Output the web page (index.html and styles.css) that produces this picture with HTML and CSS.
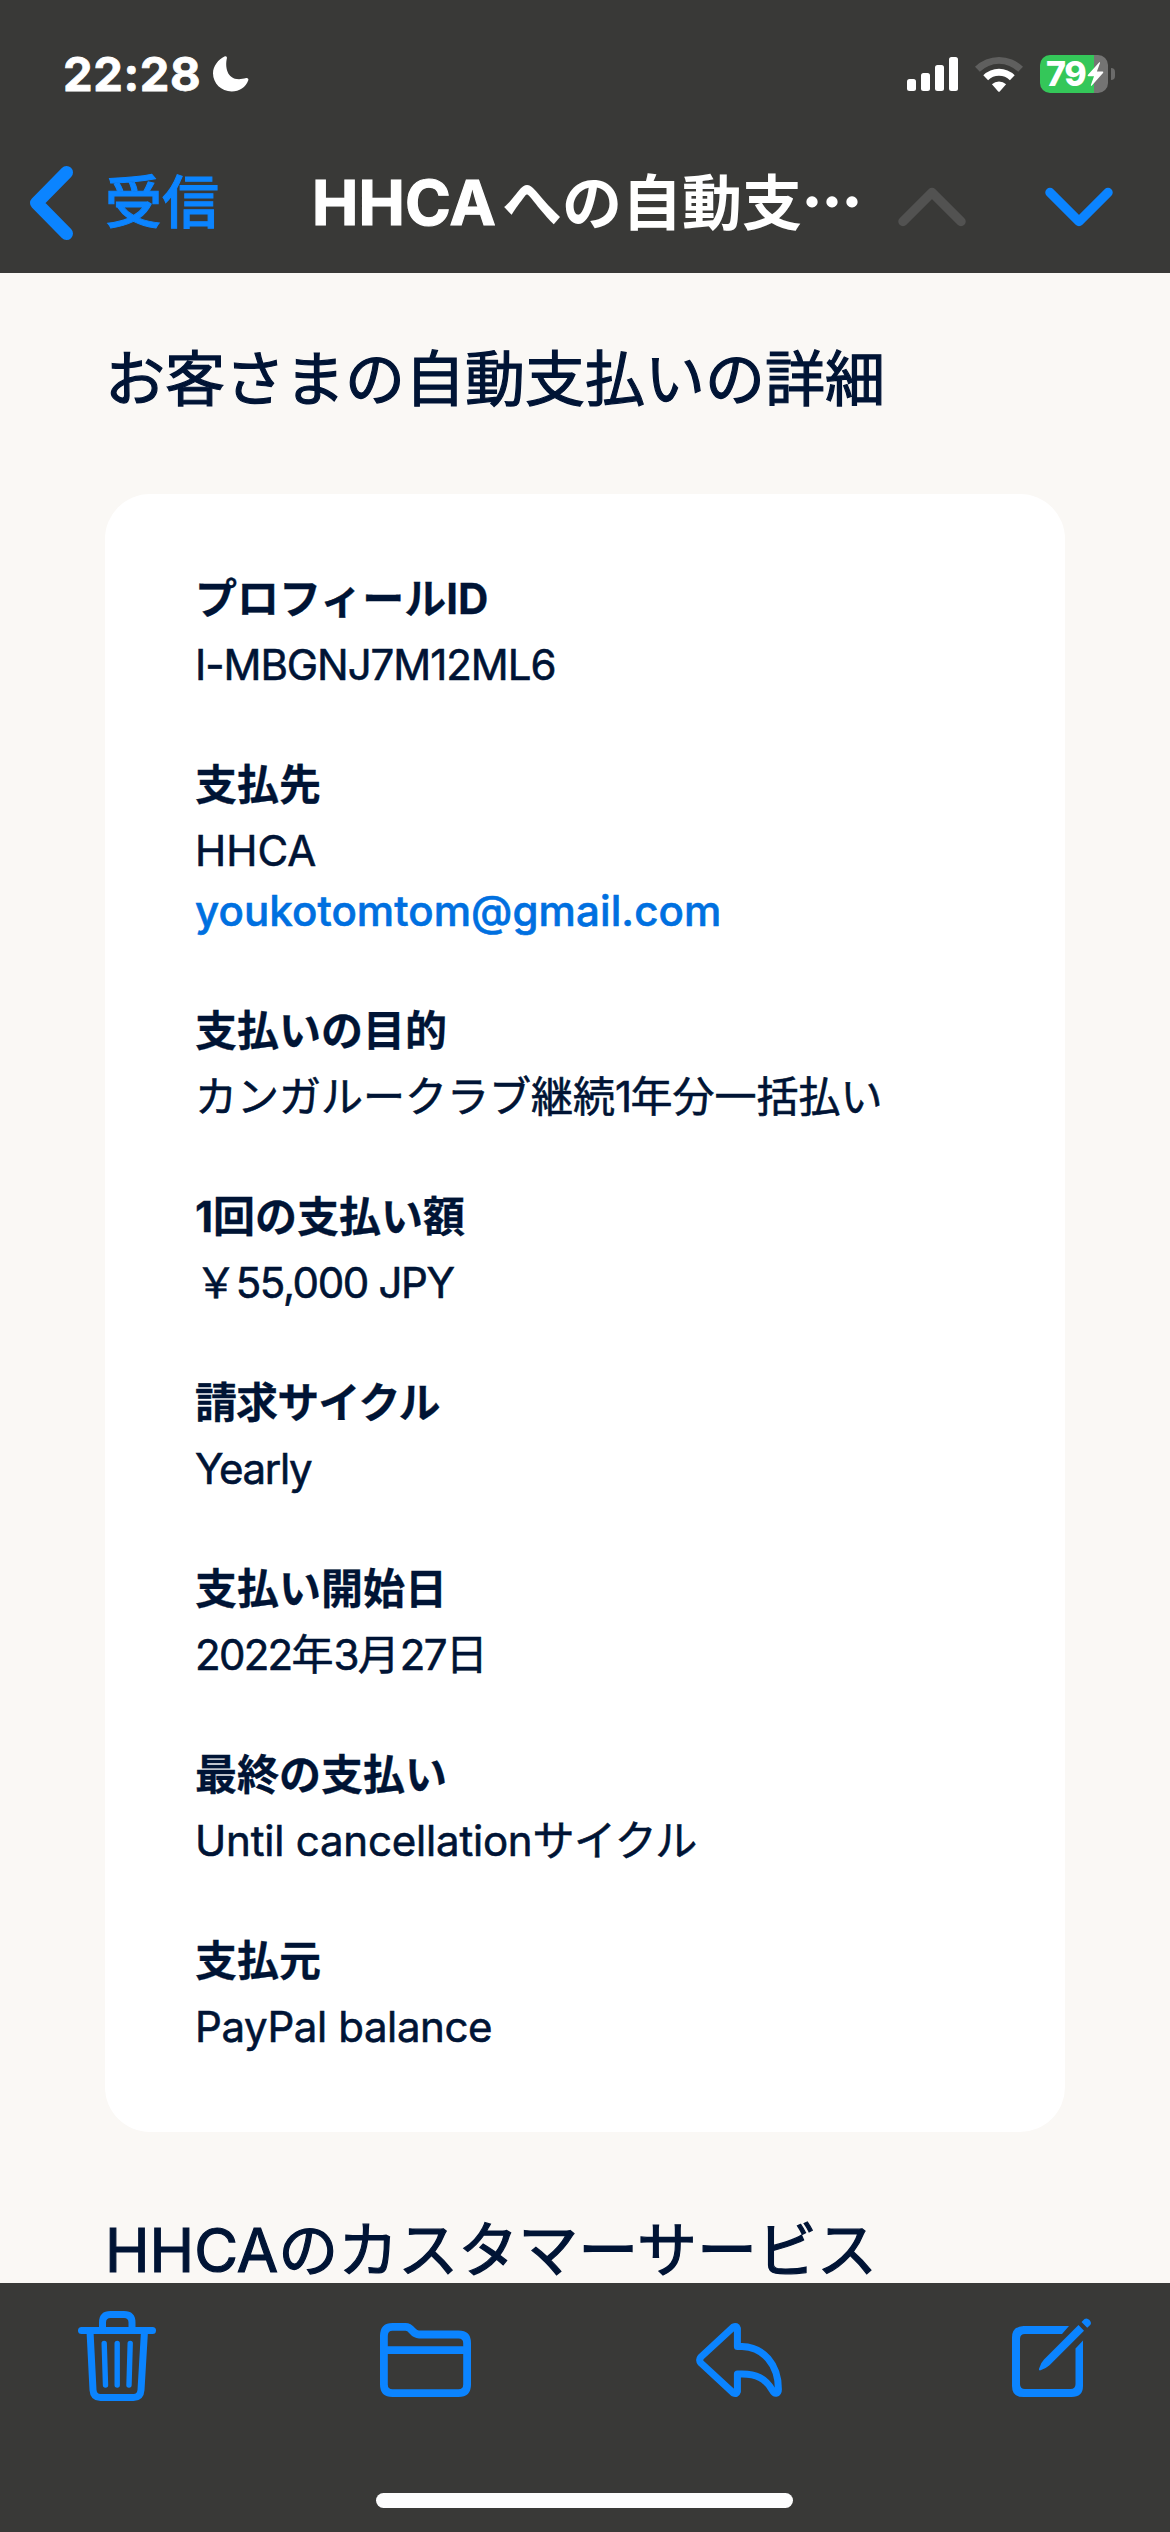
FILE: index.html
```html
<!DOCTYPE html>
<html lang="ja">
<head>
<meta charset="utf-8">
<meta name="viewport" content="width=device-width">
<title>お客さまの自動支払いの詳細</title>
<link rel="stylesheet" href="styles.css">
</head>
<body>
<div class="screen">
  <header class="header">
    <div class="status">
      <div class="status-left">
        <span class="time">22:28</span>
        <svg class="moon" width="36" height="36" viewBox="0 0 36 36"><path d="M11.500.6c1.300-.9 2.800.2 2.400 1.600C11.600 12 14.500 27.500 33.200 22c1.600-.2 2.600.8 2.100 2.200C32.800 31.200 26.300 35.500 18.700 35.500 8.300 35.500 0 27.400 0 17.300 0 10.200 5.600 3.200 11.500.6z" fill="#fff"/></svg>
      </div>
      <div class="status-right">
        <svg class="signal" width="51" height="34" viewBox="0 0 51 34" fill="#fff"><rect x="0" y="22" width="9" height="12" rx="2.500"/><rect x="14" y="16" width="9" height="18" rx="2.500"/><rect x="28" y="8" width="9" height="26" rx="2.500"/><rect x="42" y="0" width="9" height="34" rx="2.500"/></svg>
        <svg class="wifi" width="48" height="36" viewBox="0 0 48 36"><path d="M0 10.800A34 34 0 0 1 48 10.800L43.200 15.800A27.200 27.200 0 0 0 4.800 15.800z" fill="#5f5f5e"/><path d="M8.300 19.200A22.500 22.500 0 0 1 39.700 19.200L34.900 24.200A15.600 15.600 0 0 0 13.100 24.200z" fill="#fff"/><path d="M16.900 28.200A10.500 10.500 0 0 1 31.100 28.200L25 35.300Q24 36.300 23 35.300z" fill="#fff"/></svg>
        <div class="battery">
          <div class="battery-body">
            <span class="battery-text">79</span>
            <svg width="17" height="24" viewBox="0 0 17 24"><path d="M12.300.2Q13.300 0 13 1L9.900 9.500H15.600Q17 9.700 16 11L4.900 23.600Q3.700 24.400 3.900 23.100L7 14.200H1.300Q0 14 1 12.700z" fill="#fff"/></svg>
          </div>
          <div class="battery-cap"></div>
        </div>
      </div>
    </div>
    <nav class="nav">
      <a class="back">
        <svg width="44" height="74" viewBox="0 0 44 74"><path d="M37.500 6.500L7.500 37L37.500 67.500" fill="none" stroke="#0b84ff" stroke-width="13" stroke-linecap="round" stroke-linejoin="round"/></svg>
        <span class="back-label">受信</span>
      </a>
      <h1 class="title"><span class="title-latin">HHCA</span>への自動支<span class="cjk">…</span></h1>
      <div class="arrows">
        <svg width="68" height="40" viewBox="0 0 68 40"><path d="M5 34.500L34 5.500L63 34.500" fill="none" stroke="#525251" stroke-width="9.500" stroke-linecap="round" stroke-linejoin="round"/></svg>
        <svg width="68" height="40" viewBox="0 0 68 40"><path d="M5 5.500L34 34.500L63 5.500" fill="none" stroke="#0b84ff" stroke-width="9.500" stroke-linecap="round" stroke-linejoin="round"/></svg>
      </div>
    </nav>
  </header>

  <main class="mail">
    <h2 class="heading">お客さまの自動支払いの詳細</h2>
    <dl class="card">
      <div class="row"><dt>プロフィールID</dt><dd class="code">I-MBGNJ7M12ML6</dd></div>
      <div class="row"><dt>支払先</dt><dd>HHCA</dd><dd><a class="email">youkotomtom@gmail.com</a></dd></div>
      <div class="row"><dt>支払いの目的</dt><dd>カンガルークラブ継続<span class="digits">1</span>年分一括払い</dd></div>
      <div class="row"><dt>1回の支払い額</dt><dd class="price">￥55,000 JPY</dd></div>
      <div class="row"><dt class="cycle-label">請求サイクル</dt><dd class="cycle">Yearly</dd></div>
      <div class="row"><dt>支払い開始日</dt><dd><span class="digits">2022</span>年<span class="digits">3</span>月<span class="digits">27</span>日</dd></div>
      <div class="row"><dt>最終の支払い</dt><dd><span class="until">Until cancellation</span><span class="kana">サイクル</span></dd></div>
      <div class="row"><dt>支払元</dt><dd class="source">PayPal balance</dd></div>
    </dl>
    <h2 class="heading service">HHCAのカスタマーサービス</h2>
  </main>

  <footer class="toolbar">
    <div class="tools">
      <svg class="trash" width="78" height="90" viewBox="0 0 78 90" fill="none" stroke="#0b84ff" stroke-linecap="round" stroke-linejoin="round"><path d="M3.500 19.500H74.500" stroke-width="7"/><path d="M24.500 19V11.500Q24.500 3.500 32.500 3.500H46Q54 3.500 54 11.500V19M12 20L15 79Q15.500 86.500 22.500 86.500H55.500Q62.500 86.500 63 79L66.500 20" stroke-width="7"/><path d="M26.200 32.500L27.500 74M39.200 32.500V74M52.200 32.500L51 74" stroke-width="5.400"/></svg>
      <svg class="folder" width="91" height="74" viewBox="0 0 91 74" fill="none" stroke="#0b84ff" stroke-width="7.800" stroke-linejoin="round"><path d="M3.900 13Q3.900 3.900 12.500 3.900H25.500C32.500 3.900 32 11.500 39 11.500H78.500Q87.100 11.500 87.100 20V61.500Q87.100 70.100 78.500 70.100H12.500Q3.900 70.100 3.900 61.500zM4 27.200H87"/></svg>
      <svg class="reply" width="86" height="74" viewBox="0 0 86 74" fill="none" stroke="#0b84ff" stroke-width="7" stroke-linejoin="round"><path d="M37.500 3.900Q40.500 2.500 41.400 5.500V23.500H46C67 24 82.500 41 82.400 66.500C82.400 71 78.500 71.500 76.500 67.500C69.500 55 60 51 46 51H41.400V68.500Q40.500 71.500 37.500 70.100L4.900 40Q2.500 37 4.900 34z"/></svg>
      <svg width="79" height="79" viewBox="0 0 79 79"><path d="M57 8H11.500Q0 8.500 0 19.500V68Q0 79 11.500 79H59.500Q71 79 71 68V22.500L63.500 30.500V66Q63.500 71 58.500 71H13Q8 71 8 66V21Q8 16 13 16H50z" fill="#0b84ff"/><path d="M66.500 7L72 12.700L37.500 47.200Q34 50.500 28 52.400Q26.300 52.400 27.300 50Q29 44.500 32 41.500zM69.500 4L72.500 1Q75 -.5 77.500 2Q80 5 78.200 7L75.200 9.800z" fill="#0b84ff"/></svg>
    </div>
    <div class="home"></div>
  </footer>
</div>
</body>
</html>
```

FILE: styles.css
```css
* {
  box-sizing: border-box;
  margin: 0;
  padding: 0;
}

body {
  width: 1170px;
  height: 2532px;
  overflow: hidden;
  background: #faf8f5;
  font-family: Inter, "Noto Sans CJK JP", sans-serif;
  color: #001435;
}

svg {
  display: block;
  flex: none;
  overflow: visible;
}

.screen {
  display: flex;
  flex-direction: column;
  width: 1170px;
  height: 2532px;
}

.header {
  flex: none;
  height: 273px;
  background: #393937;
  color: #fff;
}

.status {
  display: flex;
  justify-content: space-between;
  align-items: center;
  height: 148px;
  padding: 0 55px 0 63px;
}

.status-left,
.status-right {
  display: flex;
  align-items: center;
}

.time {
  width: 150px;
  font-size: 47px;
  font-weight: 700;
  line-height: 60px;
  letter-spacing: 0.6px;
  white-space: nowrap;
  -webkit-text-stroke: 0.8px currentColor;
}

.wifi {
  margin: 0 17px;
}

.battery {
  display: flex;
  align-items: center;
  gap: 3px;
}

.battery-body {
  display: flex;
  align-items: center;
  gap: 1px;
  width: 68px;
  height: 38px;
  padding-left: 6px;
  border-radius: 10px;
  background: linear-gradient(to right, #34c759 54px, #747473 54px);
}

.battery-text {
  width: 40px;
  font-size: 34px;
  font-weight: 800;
  line-height: 38px;
  letter-spacing: -1.5px;
}

.battery-cap {
  width: 4px;
  height: 12px;
  border-radius: 0 4px 4px 0;
  background: #6b6b6a;
}

.nav {
  display: flex;
  align-items: center;
  height: 110px;
  padding: 0 57px 0 29px;
}

.back {
  display: flex;
  align-items: center;
  gap: 32px;
  width: 283px;
  color: #0b84ff;
}

.back-label {
  font-size: 57px;
  font-weight: 500;
  line-height: 80px;
  -webkit-text-stroke: 1px currentColor;
}

.title {
  width: 586px;
  padding-bottom: 4px;
  font-size: 60px;
  font-weight: 700;
  line-height: 80px;
  white-space: nowrap;
}

.title-latin {
  margin-right: 6px;
  font-size: 62px;
  letter-spacing: 0.2px;
  -webkit-text-stroke: 1.2px currentColor;
}

.cjk {
  font-family: "Noto Sans CJK JP", sans-serif;
  -webkit-text-stroke: 1.5px currentColor;
}

.arrows {
  display: flex;
  gap: 79px;
  padding-top: 8px;
}

.mail {
  flex: 1;
  min-height: 0;
  overflow: hidden;
  padding: 61px 105px 0;
}

.heading {
  font-size: 60px;
  font-weight: 400;
  line-height: 90px;
  white-space: nowrap;
  -webkit-text-stroke: 1.2px currentColor;
}

.card {
  display: flex;
  flex-direction: column;
  gap: 60px;
  height: 1638px;
  margin-top: 70px;
  padding: 75px 90px 0;
  border-radius: 45px;
  background: #fff;
}

.row {
  font-size: 42px;
  line-height: 60px;
  white-space: nowrap;
}

.row dt {
  margin-bottom: 6px;
  font-weight: 700;
  -webkit-text-stroke: 0.3px currentColor;
}

.row dd {
  -webkit-text-stroke: 0.6px currentColor;
}

.row .cycle-label {
  letter-spacing: -0.9px;
}

.code {
  letter-spacing: -1.05px;
}

.price {
  letter-spacing: -1.35px;
}

.cycle {
  letter-spacing: -1.3px;
}

.digits {
  letter-spacing: -1.7px;
}

.until {
  letter-spacing: -0.2px;
}

.kana {
  letter-spacing: -0.4px;
}

.source {
  letter-spacing: -0.4px;
}

.email {
  color: #0070e0;
  font-weight: 500;
  letter-spacing: 0.1px;
}

.service {
  margin-top: 86px;
  line-height: 64px;
}

.toolbar {
  display: flex;
  flex: none;
  flex-direction: column;
  justify-content: space-between;
  align-items: center;
  height: 249px;
  padding: 28px 79px 24px 78px;
  background: #393937;
}

.tools {
  display: flex;
  justify-content: space-between;
  align-items: flex-end;
  width: 100%;
  height: 86px;
}

.trash {
  margin-bottom: -4px;
}

.reply {
  margin-right: 6px;
}

.home {
  width: 417px;
  height: 15px;
  border-radius: 8px;
  background: #fdfdfd;
}
```
